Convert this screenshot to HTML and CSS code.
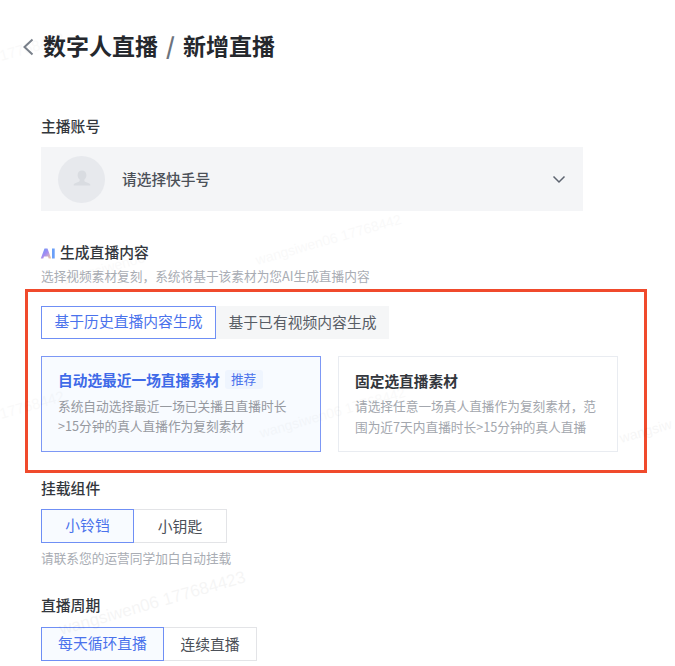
FILE: index.html
```html
<!DOCTYPE html>
<html lang="zh-CN">
<head>
<meta charset="utf-8">
<title>新增直播</title>
<link rel="stylesheet" href="styles.css">
</head>
<body>
<div class="page">
  <header class="header">
    <svg class="back" viewBox="0 0 12 18" width="12" height="18"><path d="M10.500 1.500 2.500 9l8 7.500" fill="none" stroke="#7a818b" stroke-width="2"/></svg>
    <h1 class="title">数字人直播<span class="slash">/</span>新增直播</h1>
  </header>

  <div class="label label-account">主播账号</div>
  <div class="select">
    <div class="avatar">
      <svg viewBox="0 0 24 24" width="24" height="24"><path d="M12 3.500c2.700 0 4.400 2 4.400 4.600 0 2-.9 3.600-2 4.500v1.200c0 .7 1 1.100 2.600 1.600 1.700.5 3.300 1.100 3.300 2.400v.7H3.700v-.7c0-1.300 1.600-1.900 3.300-2.400 1.600-.5 2.600-.9 2.600-1.600v-1.200c-1.100-.9-2-2.500-2-4.500C7.600 5.500 9.300 3.500 12 3.500Z" fill="#d9dce1"/></svg>
    </div>
    <span class="select-text">请选择快手号</span>
    <svg class="chevron" viewBox="0 0 14 9" width="14" height="9"><path d="M1.500 1.500 7 7l5.500-5.500" fill="none" stroke="#5d6470" stroke-width="1.500"/></svg>
  </div>

  <div class="label label-ai">
    <svg class="ai-icon" viewBox="0 0 14 11" width="14" height="11">
      <defs><linearGradient id="aig" x1="0" y1="0" x2="1" y2="1"><stop offset="0" stop-color="#5f9bf7"/><stop offset=".5" stop-color="#a68cf2"/><stop offset="1" stop-color="#f6cf9a"/></linearGradient></defs>
      <path d="M3.500 .5h3L10.200 10.500H7.700l-.7-1.900H3l-.7 1.900H-.2Z" fill="url(#aig)"/>
      <rect x="11" y=".5" width="2.700" height="10" fill="#6a9ff8"/>
    </svg>
    生成直播内容
  </div>
  <div class="hint hint-ai">选择视频素材复刻，系统将基于该素材为您AI生成直播内容</div>

  <section class="highlight">
    <div class="tabs">
      <div class="tab tab-active">基于历史直播内容生成</div>
      <div class="tab">基于已有视频内容生成</div>
    </div>
    <div class="cards">
      <div class="card card-active">
        <div class="card-title">自动选最近一场直播素材<span class="tag">推荐</span></div>
        <p class="card-text">系统自动选择最近一场已关播且直播时长<br>&gt;15分钟的真人直播作为复刻素材</p>
      </div>
      <div class="card">
        <div class="card-title">固定选直播素材</div>
        <p class="card-text">请选择任意一场真人直播作为复刻素材，范<br>围为近7天内直播时长&gt;15分钟的真人直播</p>
      </div>
    </div>
  </section>

  <div class="label label-mount">挂载组件</div>
  <div class="segments">
    <div class="segment segment-active seg-a">小铃铛</div>
    <div class="segment seg-a">小钥匙</div>
  </div>
  <div class="hint hint-mount">请联系您的运营同学加白自动挂载</div>

  <div class="label label-cycle">直播周期</div>
  <div class="segments segments-last">
    <div class="segment segment-active seg-b">每天循环直播</div>
    <div class="segment seg-c">连续直播</div>
  </div>

  <div class="marks" aria-hidden="true">
    <span class="mark m1">17768442</span>
    <span class="mark m2">wangsiwen06 17768442</span>
    <span class="mark m3">17768442</span>
    <span class="mark m4">wangsiwen06 17768442</span>
    <span class="mark m5">wangsiwen06</span>
    <span class="mark m6">wangsiw</span>
    <span class="mark m7">wangsiwen06 177684423</span>
  </div>
</div>
</body>
</html>
```
FILE: styles.css
```css
* { box-sizing: border-box; }
html, body { margin: 0; padding: 0; background: #fff; }
body {
  font-family: "Noto Sans CJK SC", "Inter", "Liberation Sans", sans-serif;
  color: #33373d;
  overflow: hidden;
}
.page {
  position: relative;
  width: 675px;
  height: 666px;
  padding-left: 41px;
  overflow: hidden;
}
.header {
  height: 94px;
  display: flex;
  align-items: center;
  margin-left: -19px;
  gap: 9px;
}
.back { flex: none; }
.title {
  margin: 0;
  height: 32px;
  font-size: 23px;
  line-height: 28px;
  font-weight: 700;
  color: #25282d;
}
.slash {
  display: inline-block;
  width: 25px;
  text-align: center;
  color: #6c737d;
}
.label {
  height: 20px;
  font-size: 14.800px;
  line-height: 18px;
  font-weight: 500;
  color: #33373d;
  display: flex;
  align-items: flex-start;
}
.label-account { margin-top: 23px; }
.select {
  margin-top: 10px;
  width: 542px;
  height: 64px;
  background: #f4f5f7;
  display: flex;
  align-items: center;
  padding: 0 17px;
}
.avatar {
  width: 47px;
  height: 47px;
  border-radius: 50%;
  background: #e7e9ed;
  display: flex;
  align-items: center;
  justify-content: center;
  flex: none;
}
.select-text {
  margin-left: 17px;
  padding-bottom: 2px;
  font-size: 14.700px;
  font-weight: 500;
  color: #4b5058;
}
.chevron { margin-left: auto; }
.label-ai { margin-top: 32px; gap: 5px; }
.ai-icon { flex: none; align-self: center; overflow: visible; }
.hint {
  height: 18px;
  font-size: 12.700px;
  line-height: 16px;
  color: #a9adb4;
}
.hint-ai { margin-top: 5px; }
.highlight {
  margin: 3px 0 0 -16px;
  width: 622px;
  height: 184px;
  border: 3px solid #f04a2c;
  padding: 14px 13px 0;
}
.tabs { display: flex; }
.tab {
  width: 173px;
  height: 33px;
  background: #f5f6f7;
  font-size: 14.800px;
  line-height: 31px;
  text-align: center;
  color: #585d65;
}
.tab-active {
  width: 175px;
  background: #fff;
  border: 1.500px solid #6f8ff5;
  line-height: 28px;
  color: #4a72ec;
}
.cards {
  display: flex;
  gap: 17px;
  margin-top: 17px;
}
.card {
  width: 280px;
  height: 96px;
  border: 1px solid #e9ecf1;
  padding: 12px 16px 0;
  background: #fff;
}
.card-active {
  border: 1.500px solid #7d98f5;
  background: #f8fbff;
  padding-top: 11.500px;
}
.card-title {
  display: flex;
  align-items: center;
  height: 22px;
  font-size: 14.700px;
  font-weight: 700;
  color: #33373d;
}
.card-active .card-title { color: #3f6ae8; }
.tag {
  margin-left: 5px;
  width: 38px;
  height: 19px;
  border-radius: 3px;
  background: #eff5fe;
  font-size: 12.700px;
  font-weight: 400;
  line-height: 18px;
  text-align: center;
  color: #4a72ec;
}
.card-text {
  margin: 5px 0 0;
  font-size: 12.700px;
  line-height: 20.500px;
  color: #a3a7ae;
  white-space: nowrap;
}
.card-active .card-text { color: #96999f; }
.label-mount { margin-top: 6px; }
.segments { display: flex; margin-top: 10px; height: 34px; }
.segments-last { margin-top: 11px; }
.segment {
  height: 34px;
  border: 1px solid #e3e4e7;
  border-left: 0;
  font-size: 14.800px;
  line-height: 31px;
  text-align: center;
  color: #4b5058;
  background: #fff;
}
.segment-active {
  border: 1.500px solid #6f8ff5;
  background: #f8fbff;
  color: #4a72ec;
  line-height: 30px;
}
.seg-a { width: 93px; }
.seg-b { width: 123px; }
.seg-c { width: 93px; }
.hint-mount { margin-top: 7px; }
.label-cycle { margin-top: 28px; }
.marks { position: absolute; inset: 0; pointer-events: none; }
.mark {
  position: absolute;
  font-family: "Liberation Sans", sans-serif;
  font-size: 14px;
  line-height: 16px;
  color: #000;
  opacity: .018;
  transform: rotate(-16deg);
  transform-origin: left bottom;
  white-space: nowrap;
}
.m1 { left: 2px; top: 48px; font-size: 15px; }
.m2 { left: 258px; top: 252px; }
.m3 { left: 2px; top: 406px; font-size: 15px; }
.m4 { left: 262px; top: 425px; }
.m5 { left: 65px; top: 272px; }
.m6 { left: 622px; top: 430px; opacity: .03; }
.m7 { left: 62px; top: 622px; font-size: 17px; opacity: .035; }
```
